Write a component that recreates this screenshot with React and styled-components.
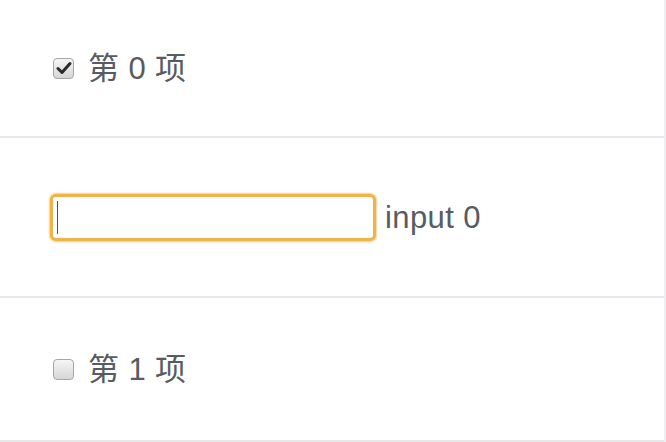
import React from 'react';
import styled, { createGlobalStyle } from 'styled-components';

const GlobalStyle = createGlobalStyle`
  html, body {
    margin: 0;
    padding: 0;
    background: #fff;
  }
  body {
    font-family: "Liberation Sans", "Noto Sans CJK SC", sans-serif;
    color: #575c62;
  }
`;

const List = styled.div`
  width: 664px;
  border-right: 2px solid #efeef4;
`;

const Row = styled.div`
  display: flex;
  align-items: center;
  height: ${p => p.h}px;
  padding-left: ${p => p.pl}px;
  border-bottom: 2px solid #e8e8e8;
  box-sizing: content-box;
`;

const Check = styled.span`
  display: inline-flex;
  align-items: center;
  justify-content: center;
  width: 21px;
  height: 21px;
  box-sizing: border-box;
  border: 1px solid #a6a6a6;
  border-radius: 4px;
  background: linear-gradient(#f6f6f6, #d6d6d6);
  margin-right: 14px;
`;

const Label = styled.span`
  font-size: 31px;
  line-height: 1;
  letter-spacing: 0.4px;
`;

const Field = styled.div`
  position: relative;
  width: 326px;
  height: 47px;
  box-sizing: border-box;
  border: 3px solid #eeb44c;
  border-radius: 6px;
  background: #fff;
  box-shadow: 0 0 2px 1px #f5d08a;
  margin-right: 9px;
`;

const Caret = styled.span`
  position: absolute;
  left: 4px;
  top: 4px;
  width: 1px;
  height: 33px;
  background: #555;
`;

function Item({ checked, n }) {
  return (
    <>
      <Check>
        {checked && (
          <svg width="16" height="14" viewBox="0 0 16 14">
            <path d="M2 7.5 L6 11.5 L14 2.5" fill="none" stroke="#2b2b2b" strokeWidth="3" strokeLinecap="round" strokeLinejoin="round" />
          </svg>
        )}
      </Check>
      <Label>第 {n} 项</Label>
    </>
  );
}

export default function App() {
  return (
    <>
      <GlobalStyle />
      <List>
        <Row h={136} pl={53}>
          <Item checked n={0} />
        </Row>
        <Row h={158} pl={50}>
          <Field>
            <Caret />
          </Field>
          <Label>input 0</Label>
        </Row>
        <Row h={142} pl={53}>
          <Item n={1} />
        </Row>
      </List>
    </>
  );
}
